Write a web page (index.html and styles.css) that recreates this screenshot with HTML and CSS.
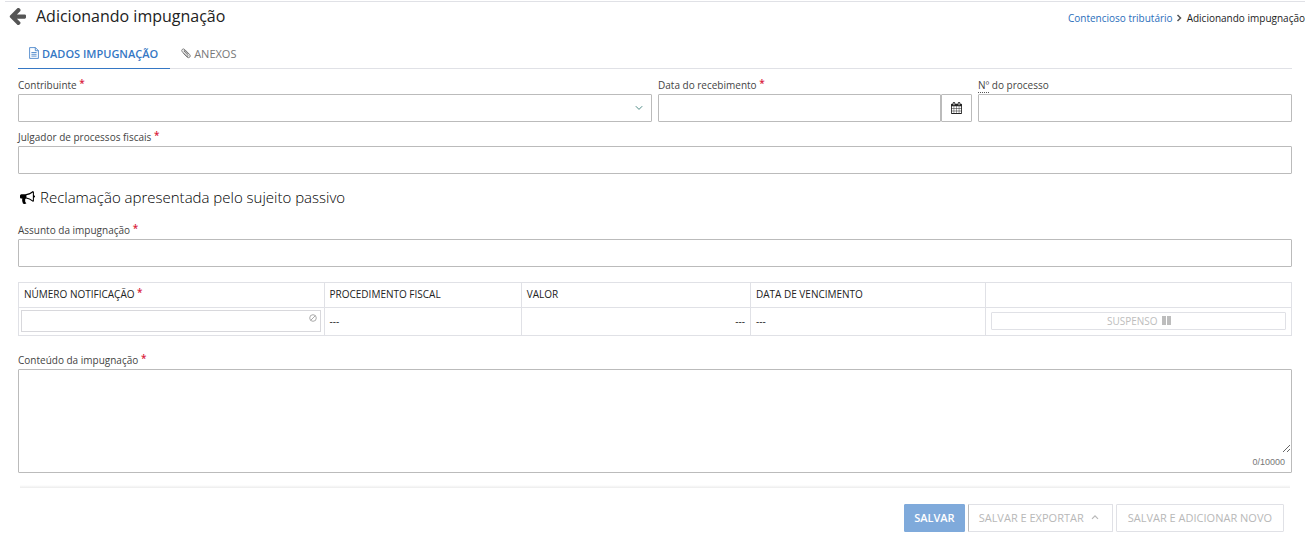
FILE: index.html
```html
<!DOCTYPE html>
<html lang="pt-BR">
<head>
<meta charset="utf-8">
<title>Adicionando impugnação</title>
<link rel="stylesheet" href="styles.css">
</head>
<body>
<header class="page-header">
  <a class="back" href="#" aria-label="Voltar"><svg viewBox="0 -64 1536 1536" width="17" height="17" fill="currentColor"><path d="M1536 640v128q0 53-32.500 90.500t-84.500 37.500h-704l293 294q38 36 38 90t-38 90l-75 76q-37 37-90 37-52 0-91-37l-651-652q-37-37-37-90 0-52 37-91l651-650q38-38 91-38 52 0 90 38l75 74q38 38 38 91t-38 91l-293 293h704q52 0 84.500 37.500t32.500 90.500z"/></svg></a>
  <h1 class="page-title">Adicionando impugnação</h1>
  <nav class="breadcrumb" aria-label="Navegação">
    <a class="crumb-link" href="#">Contencioso tributário</a>
    <svg class="crumb-sep" viewBox="0 0 6 8" width="6" height="8" fill="none" stroke="currentColor" stroke-width="1.500"><path d="M1.500 1l3 3-3 3"/></svg>
    <span>Adicionando impugnação</span>
  </nav>
</header>
<main class="content">
  <nav class="tabs">
    <a class="tab tab-active" href="#"><svg viewBox="0 0 10 12" width="10" height="12" fill="none" stroke="currentColor" stroke-width="0.800"><path d="M.6.6h5.800l3 3v7.800H.6zM6.300.6v3.100h3.100M2.400 5.500h5.200M2.400 7.300h5.200M2.400 9.100h5.200"/></svg>DADOS IMPUGNAÇÃO</a>
    <a class="tab" href="#"><svg viewBox="0 0 10 12" width="10" height="12" fill="none" stroke="currentColor" stroke-width="1" stroke-linecap="round"><path d="M3.200 4.300L6.700 8Q7.500 8.900 6.900 9.400Q6.300 9.900 5.500 9.100L1.300 4.800Q.2 3.500 1.300 2.400Q2.500 1.400 3.800 2.600L8.600 7.500Q9.900 9 8.700 10.200Q7.400 11.300 5.900 9.900L2.700 6.600M3.200 4.300Q2.800 3.700 3.300 3.400Q3.700 3.200 4.200 3.700L7.400 7"/></svg>ANEXOS</a>
  </nav>
  <form class="form">
    <div class="grid">
      <div class="field field-wide">
        <label class="label" for="contribuinte">Contribuinte <span class="req">*</span></label>
        <div class="select-wrap">
          <select class="control" id="contribuinte"><option></option></select>
          <svg class="caret" viewBox="0 0 8 6" width="8" height="6" fill="none" stroke="currentColor"><path d="M.8 1.200L4 4.400l3.200-3.200"/></svg>
        </div>
      </div>
      <div class="field">
        <label class="label" for="data">Data do recebimento <span class="req">*</span></label>
        <div class="date">
          <input class="control" id="data" type="text">
          <button class="date-button" type="button" aria-label="Abrir calendário"><svg viewBox="0 0 1664 1792" width="11" height="12" fill="currentColor"><path d="M128 1664h288v-288h-288v288zm352 0h320v-288h-320v288zm-352-352h288v-320h-288v320zm352 0h320v-320h-320v320zm-352-384h288v-288h-288v288zm736 736h320v-288h-320v288zm-384-736h320v-288h-320v288zm768 736h288v-288h-288v288zm-384-352h320v-320h-320v320zm-352-864v-288q0-13-9.500-22.500t-22.500-9.500h-64q-13 0-22.500 9.500t-9.500 22.500v288q0 13 9.500 22.500t22.500 9.500h64q13 0 22.500-9.500t9.500-22.500zm736 864h288v-320h-288v320zm-384-384h320v-288h-320v288zm384 0h288v-288h-288v288zm32-480v-288q0-13-9.500-22.500t-22.500-9.500h-64q-13 0-22.500 9.500t-9.500 22.500v288q0 13 9.500 22.500t22.500 9.500h64q13 0 22.500-9.500t9.500-22.500zm384-64v1280q0 52-38 90t-90 38h-1408q-52 0-90-38t-38-90v-1280q0-52 38-90t90-38h128v-96q0-66 47-113t113-47h64q66 0 113 47t47 113v96h384v-96q0-66 47-113t113-47h64q66 0 113 47t47 113v96h128q52 0 90 38t38 90z"/></svg></button>
        </div>
      </div>
      <div class="field">
        <label class="label" for="processo"><abbr class="abbr" title="Número">Nº</abbr> do processo</label>
        <input class="control" id="processo" type="text">
      </div>
      <div class="field field-full">
        <label class="label" for="julgador">Julgador de processos fiscais <span class="req">*</span></label>
        <input class="control" id="julgador" type="text">
      </div>
    </div>
    <h2 class="section-title"><svg viewBox="0 0 1792 1792" width="15" height="15" fill="currentColor"><path d="M1664 640q53 0 90.500 37.500t37.500 90.500-37.500 90.500-90.500 37.500v384q0 52-38 90t-90 38q-417-347-812-380-58 19-91 66t-31 100.500 40 92.500q-20 33-23 65.500t6 58 33.500 55 48 50 61.500 50.500q-29 58-111.500 83t-168.500 11.500-132-55.500q-7-23-29.500-87.500t-32-94.500-23-89-15-101 3.500-98.500 22-110.500h-122q-66 0-113-47t-47-113v-192q0-66 47-113t113-47h480q435 0 896-384 52 0 90 38t38 90v384zm-128 604v-954q-394 302-768 343v270q377 42 768 341z"/></svg>Reclamação apresentada pelo sujeito passivo</h2>
    <div class="field">
      <label class="label" for="assunto">Assunto da impugnação <span class="req">*</span></label>
      <input class="control" id="assunto" type="text">
    </div>
    <table class="table">
      <thead>
        <tr>
          <th class="col-number" id="h-numero">NÚMERO NOTIFICAÇÃO <span class="req">*</span></th>
          <th class="col-proc">PROCEDIMENTO FISCAL</th>
          <th class="col-value">VALOR</th>
          <th class="col-date">DATA DE VENCIMENTO</th>
          <th></th>
        </tr>
      </thead>
      <tbody>
        <tr>
          <td class="cell-input"><div class="lookup"><input class="lookup-input" type="text" aria-labelledby="h-numero" disabled><svg class="ban" viewBox="0 0 8 8" width="8" height="8" fill="none" stroke="currentColor"><circle cx="4" cy="4" r="3.300"/><path d="M1.800 6.200l4.400-4.400"/></svg></div></td>
          <td>---</td>
          <td class="cell-right">---</td>
          <td>---</td>
          <td><button class="suspend" type="button" disabled>SUSPENSO <svg viewBox="0 0 9 9" width="9" height="9" fill="currentColor"><path d="M0 0h4v9H0zM5 0h4v9H5z"/></svg></button></td>
        </tr>
      </tbody>
    </table>
    <div class="field">
      <label class="label" for="conteudo">Conteúdo da impugnação <span class="req">*</span></label>
      <div class="area">
        <textarea class="area-input" id="conteudo"></textarea>
        <span class="counter">0/10000</span>
      </div>
    </div>
    <div class="divider"></div>
    <footer class="actions">
      <button class="button button-primary" type="submit">SALVAR</button>
      <button class="button button-export" type="button" disabled>SALVAR E EXPORTAR <svg viewBox="0 0 8 6" width="8" height="6" fill="none" stroke="currentColor" stroke-width="1.200"><path d="M1 4.800l3-3 3 3"/></svg></button>
      <button class="button" type="button" disabled>SALVAR E ADICIONAR NOVO</button>
    </footer>
  </form>
</main>
</body>
</html>
```
FILE: styles.css
```css
* { box-sizing: border-box; }

body {
  margin: 1px 7px 0 5px;
  background: #fff;
  color: #222;
  font-family: "Open Sans", "Liberation Sans", sans-serif;
  font-size: 10px;
}

a { color: inherit; text-decoration: none; }
button, input, select, textarea { font: inherit; color: inherit; }

.page-header {
  display: flex;
  align-items: center;
  height: 30px;
  padding-left: 4px;
  border-top: 1px solid #e0e1e6;
}
.back { display: flex; color: #555; }
.page-title {
  margin: 0 0 0 10px;
  padding-bottom: 2px;
  font-size: 16px;
  line-height: 22px;
  font-weight: 400;
}
.breadcrumb {
  display: flex;
  align-items: center;
  margin-left: auto;
  padding-top: 3px;
  line-height: 14px;
}
.crumb-link { color: #2a6ebb; }
.crumb-sep { margin: 0 5px 0 3px; color: #555; }

.content { padding: 9px 13px 0; }

.tabs {
  display: flex;
  height: 29px;
  border-bottom: 1px solid #e0e1e6;
  font-size: 11px;
}
.tab {
  display: flex;
  align-items: center;
  gap: 3px;
  height: 29px;
  padding: 0 12px 2px 11px;
  border-bottom: 1px solid transparent;
  color: #777;
}
.tab-active { border-color: #3577c4; color: #3577c4; font-weight: 600; }

.form { padding-top: 9px; }
.grid {
  display: grid;
  grid-template-columns: repeat(4, 1fr);
  gap: 8px 6px;
}
.field { min-width: 0; }
.field-wide { grid-column: span 2; }
.field-full { grid-column: 1 / -1; }

.label {
  display: block;
  height: 16px;
  line-height: 14px;
  color: #444;
  font-weight: 500;
}
.req {
  color: #d9213a;
  font-size: 10px;
  font-weight: 600;
  line-height: 10px;
  vertical-align: 2px;
}
.abbr { text-decoration: none; border-bottom: 1px dotted #555; }

.control {
  display: block;
  width: 100%;
  height: 28px;
  padding: 0 6px;
  border: 1px solid #bbb;
  border-radius: 1px;
  background: #fff;
  appearance: none;
}
.select-wrap { position: relative; }
.caret { position: absolute; top: 11px; right: 9px; color: #4d8a85; pointer-events: none; }
.date { display: flex; }
.date .control { flex: 1; min-width: 0; }
.date-button {
  display: flex;
  align-items: center;
  justify-content: center;
  width: 31px;
  padding: 0;
  border: 1px solid #bbb;
  border-radius: 1px;
  background: #fff;
}

.section-title {
  display: flex;
  align-items: center;
  gap: 5px;
  margin: 13px 0 16px;
  padding-left: 2px;
  color: #000;
  font-size: 15px;
  line-height: 20px;
  font-weight: 300;
}

.table {
  width: 100%;
  margin: 15px 0 17px;
  border-collapse: collapse;
  table-layout: fixed;
}
.table th, .table td {
  padding: 0 5px;
  border: 1px solid #e0e1e6;
  text-align: left;
}
.table th { height: 25px; padding-bottom: 2px; font-weight: 500; white-space: nowrap; }
.table td { height: 28px; padding-bottom: 2px; }
.table .cell-right { text-align: right; }
.table .cell-input { padding: 0 3px 2px 2px; }
.col-number { width: 24%; }
.col-proc { width: 15.5%; }
.col-value { width: 18%; }
.col-date { width: 18.5%; }

.lookup { position: relative; }
.lookup-input {
  display: block;
  width: 100%;
  height: 22px;
  border: 1px solid #d8d8dc;
  background: #fff;
}
.ban { position: absolute; top: 4px; right: 4px; color: #aaa; }
.suspend {
  display: flex;
  align-items: center;
  justify-content: center;
  gap: 4px;
  width: 100%;
  height: 18px;
  padding: 0;
  border: 1px solid #e0e1e6;
  border-radius: 1px;
  background: #fff;
  color: #bdbdbd;
}

.area { border: 1px solid #bbb; border-radius: 1px; }
.area-input {
  display: block;
  width: 100%;
  height: 83px;
  padding: 6px;
  border: 0;
  background: transparent;
  outline: 0;
  resize: vertical;
}
.counter {
  display: block;
  padding-right: 6px;
  color: #777;
  font-family: "Liberation Sans", Arial, sans-serif;
  font-size: 9px;
  line-height: 19px;
  text-align: right;
}

.divider {
  height: 3px;
  margin: 12px 2px 0;
  background: linear-gradient(#fff, #ececec);
}

.actions {
  display: flex;
  justify-content: flex-end;
  gap: 3px;
  padding: 16px 8px 0;
}
.button {
  display: flex;
  align-items: center;
  gap: 7px;
  height: 28px;
  padding: 0 11px 2px;
  border: 1px solid #e0e1e6;
  border-radius: 1px;
  background: #fff;
  color: #b8b8b8;
  font-size: 11px;
}
.button-primary { padding: 0 9px 2px; border-color: #7faadb; background: #7faadb; color: #fff; font-weight: 600; }
.button-export { padding: 0 13px 2px 10px; border-left-color: #bbb; }
```
